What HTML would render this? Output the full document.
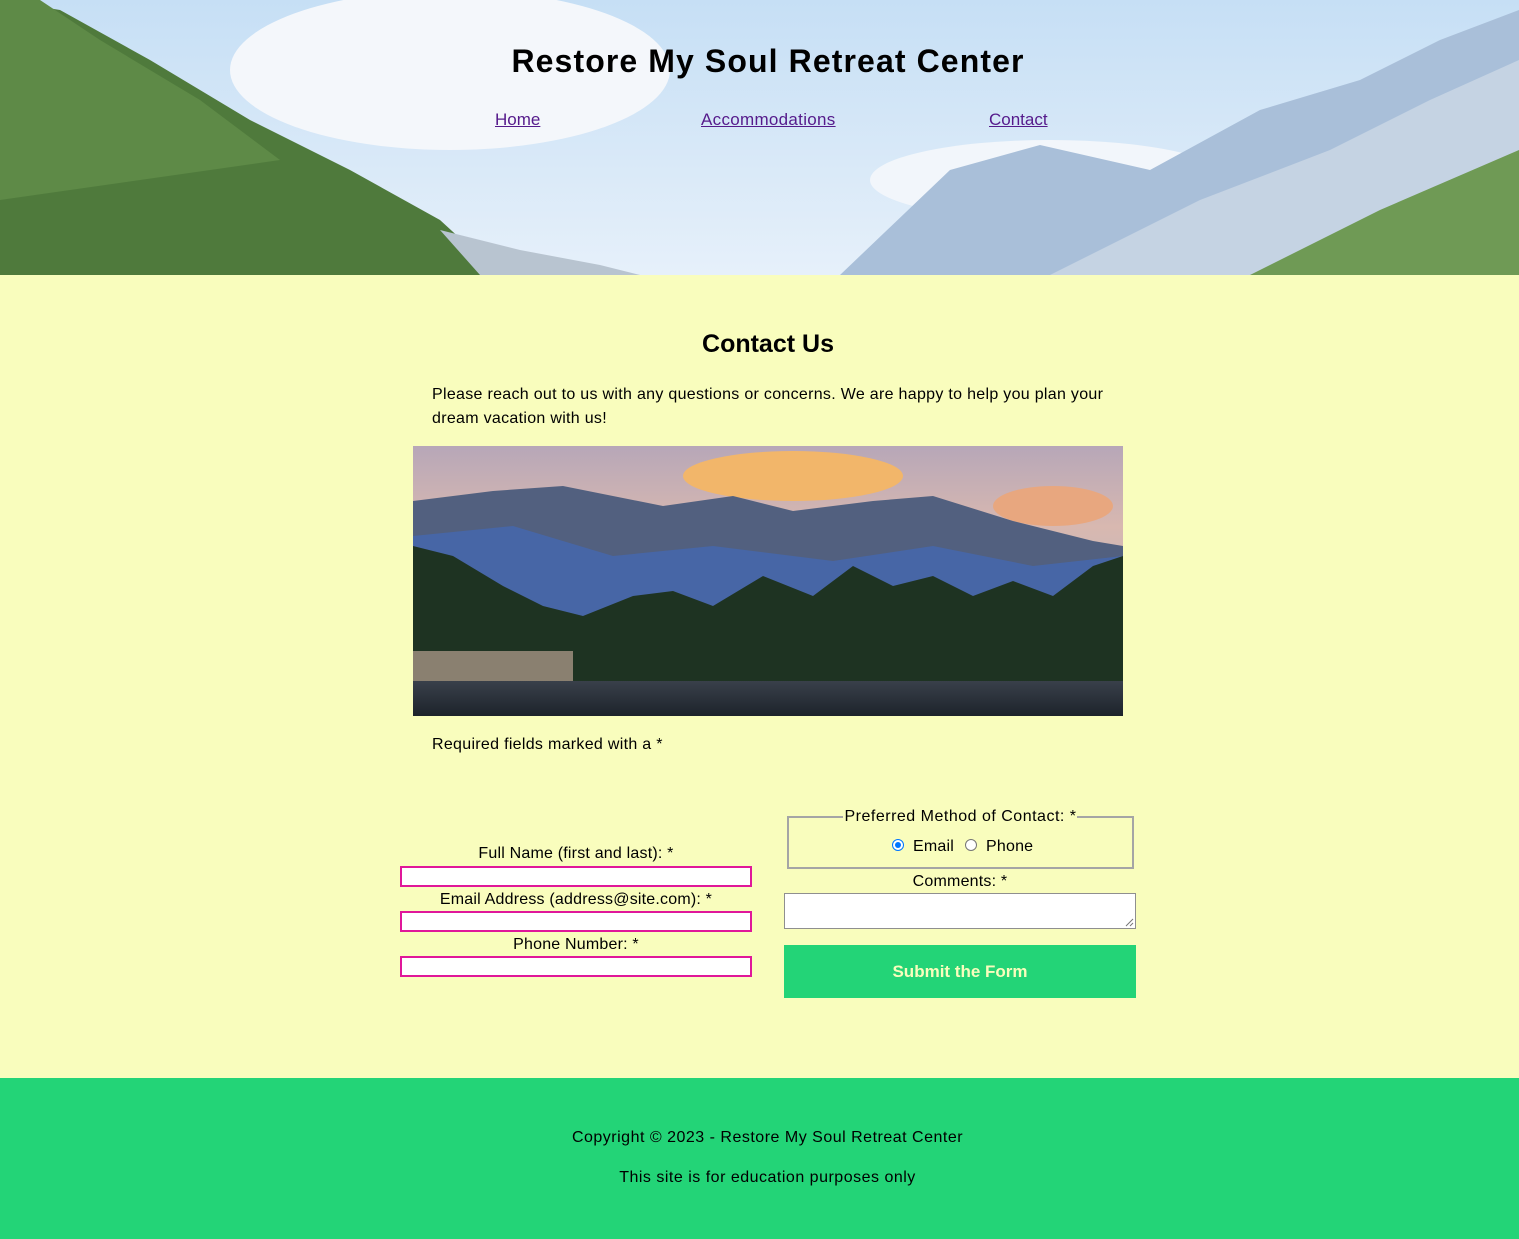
<!DOCTYPE html>
<html><head><meta charset="utf-8"><style>
*{box-sizing:border-box}
body{margin:0;width:1519px;height:1239px;font-family:"Liberation Sans",sans-serif;background:#f9fdbd;color:#000;overflow:hidden}
header{position:relative;height:275px;overflow:hidden}
header svg{position:absolute;left:0;top:0}
h1{position:absolute;top:43px;left:0;width:1536px;text-align:center;margin:0;font-size:32px;font-weight:bold;letter-spacing:1.1px}
nav a{position:absolute;top:110px;font-size:17px;color:#551a8b;text-decoration:underline}
h2{position:absolute;top:330px;width:1536px;text-align:center;margin:0;font-size:25px}
.p{position:absolute;font-size:16px;line-height:24px;letter-spacing:0.3px}
.lbl{position:absolute;font-size:16px;text-align:center;letter-spacing:0.2px}
.in{position:absolute;left:400px;width:352px;height:21px;background:#fff;border:2px solid #e0179a}
footer{position:absolute;top:1078px;left:0;width:1519px;height:161px;background:#23d477;text-align:center;font-size:16px;letter-spacing:0.5px;padding-left:16px}
</style></head><body>
<header>
<svg width="1519" height="275" viewBox="0 0 1519 275">
<defs><linearGradient id="sk" x1="0" y1="0" x2="0" y2="1"><stop offset="0" stop-color="#c6dff5"/><stop offset="1" stop-color="#e6f0fa"/></linearGradient></defs>
<rect width="1519" height="275" fill="url(#sk)"/>
<ellipse cx="450" cy="70" rx="220" ry="80" fill="#f4f7fb"/>
<ellipse cx="1050" cy="180" rx="180" ry="40" fill="#f2f6fb"/>
<polygon points="840,275 950,170 1040,145 1150,170 1260,110 1360,80 1440,40 1519,10 1519,275" fill="#a9bfd9"/>
<polygon points="1050,275 1200,200 1330,150 1430,100 1519,60 1519,275" fill="#c5d3e3"/>
<polygon points="1250,275 1380,210 1519,150 1519,275" fill="#6f9a55"/>
<polygon points="0,0 60,10 150,60 250,120 350,170 440,220 500,275 0,275" fill="#4f7a3c"/>
<polygon points="0,0 40,0 100,40 200,100 280,160 0,200" fill="#5e8a47"/>
<polygon points="440,230 520,250 600,265 640,275 480,275" fill="#b8c4d0"/>
</svg>
<h1>Restore My Soul Retreat Center</h1>
<nav><a style="left:495px">Home</a><a style="left:701px;letter-spacing:0.3px">Accommodations</a><a style="left:989px">Contact</a></nav>
</header>
<h2>Contact Us</h2>
<div class="p" style="left:432px;top:383px;width:690px">Please reach out to us with any questions or concerns. We are happy to help you plan your dream vacation with us!</div>
<svg style="position:absolute;left:413px;top:446px" width="710" height="270" viewBox="0 0 710 270">
<defs><linearGradient id="s2" x1="0" y1="0" x2="0" y2="1"><stop offset="0" stop-color="#b7a7b8"/><stop offset="0.3" stop-color="#d8b8b0"/><stop offset="1" stop-color="#9fb7d3"/></linearGradient>
<linearGradient id="w" x1="0" y1="0" x2="0" y2="1"><stop offset="0" stop-color="#39404a"/><stop offset="1" stop-color="#1d232b"/></linearGradient></defs>
<rect width="710" height="270" fill="url(#s2)"/>
<ellipse cx="380" cy="30" rx="110" ry="25" fill="#f2b66a"/>
<ellipse cx="640" cy="60" rx="60" ry="20" fill="#e8a77f"/>
<polygon points="0,55 80,45 150,40 250,60 320,50 380,65 460,55 520,50 600,75 680,95 710,100 710,200 0,200" fill="#52607f"/>
<polygon points="0,90 100,80 200,110 300,100 420,115 520,100 620,120 710,110 710,220 0,220" fill="#4766a6"/>
<polygon points="0,100 40,110 90,140 130,160 170,170 220,150 260,145 300,160 350,130 400,150 440,120 480,140 520,130 560,150 600,135 640,150 680,120 710,110 710,240 0,240" fill="#1e3322"/>
<rect x="0" y="205" width="160" height="30" fill="#8a8070"/>
<rect y="235" width="710" height="35" fill="url(#w)"/>
</svg>
<div class="p" style="left:432px;top:733px">Required fields marked with a *</div>
<div class="lbl" style="left:400px;width:352px;top:845px">Full Name (first and last): *</div>
<div class="in" style="top:866px"></div>
<div class="lbl" style="left:400px;width:352px;top:891px">Email Address (address@site.com): *</div>
<div class="in" style="top:911px"></div>
<div class="lbl" style="left:400px;width:352px;top:936px">Phone Number: *</div>
<div class="in" style="top:956px"></div>
<div style="position:absolute;left:787px;top:816px;width:347px;height:53px;border:2px solid #a5a5a5;border-top:none"></div>
<div style="position:absolute;left:787px;top:816px;width:56px;border-top:2px solid #a5a5a5"></div>
<div style="position:absolute;left:1077px;top:816px;width:57px;border-top:2px solid #a5a5a5"></div>
<div class="lbl" style="left:787px;width:347px;top:808px;letter-spacing:0.5px">Preferred Method of Contact: *</div>
<div style="position:absolute;left:892px;top:839px;width:12px;height:12px;border-radius:50%;border:1px solid #0075ff;background:#fff"><div style="margin:2px;width:6px;height:6px;border-radius:50%;background:#0075ff"></div></div>
<div class="lbl" style="left:913px;top:838px">Email</div>
<div style="position:absolute;left:965px;top:839px;width:12px;height:12px;border-radius:50%;border:1px solid #767676;background:#fff"></div>
<div class="lbl" style="left:986px;top:838px">Phone</div>
<div class="lbl" style="left:784px;width:352px;top:873px">Comments: *</div>
<div style="position:absolute;left:784px;top:893px;width:352px;height:36px;background:#fff;border:1px solid #8f8f8f"><svg style="position:absolute;right:1px;bottom:1px" width="9" height="9"><path d="M8 1L1 8M8 5L5 8" stroke="#777" stroke-width="1"/></svg></div>
<div style="position:absolute;left:784px;top:945px;width:352px;height:53px;background:#23d477;color:#f9fdbd;font-weight:bold;font-size:17px;text-align:center;line-height:53px">Submit the Form</div>
<footer><div style="margin-top:51px">Copyright © 2023 - Restore My Soul Retreat Center</div><div style="margin-top:22px">This site is for education purposes only</div></footer>
</body></html>
